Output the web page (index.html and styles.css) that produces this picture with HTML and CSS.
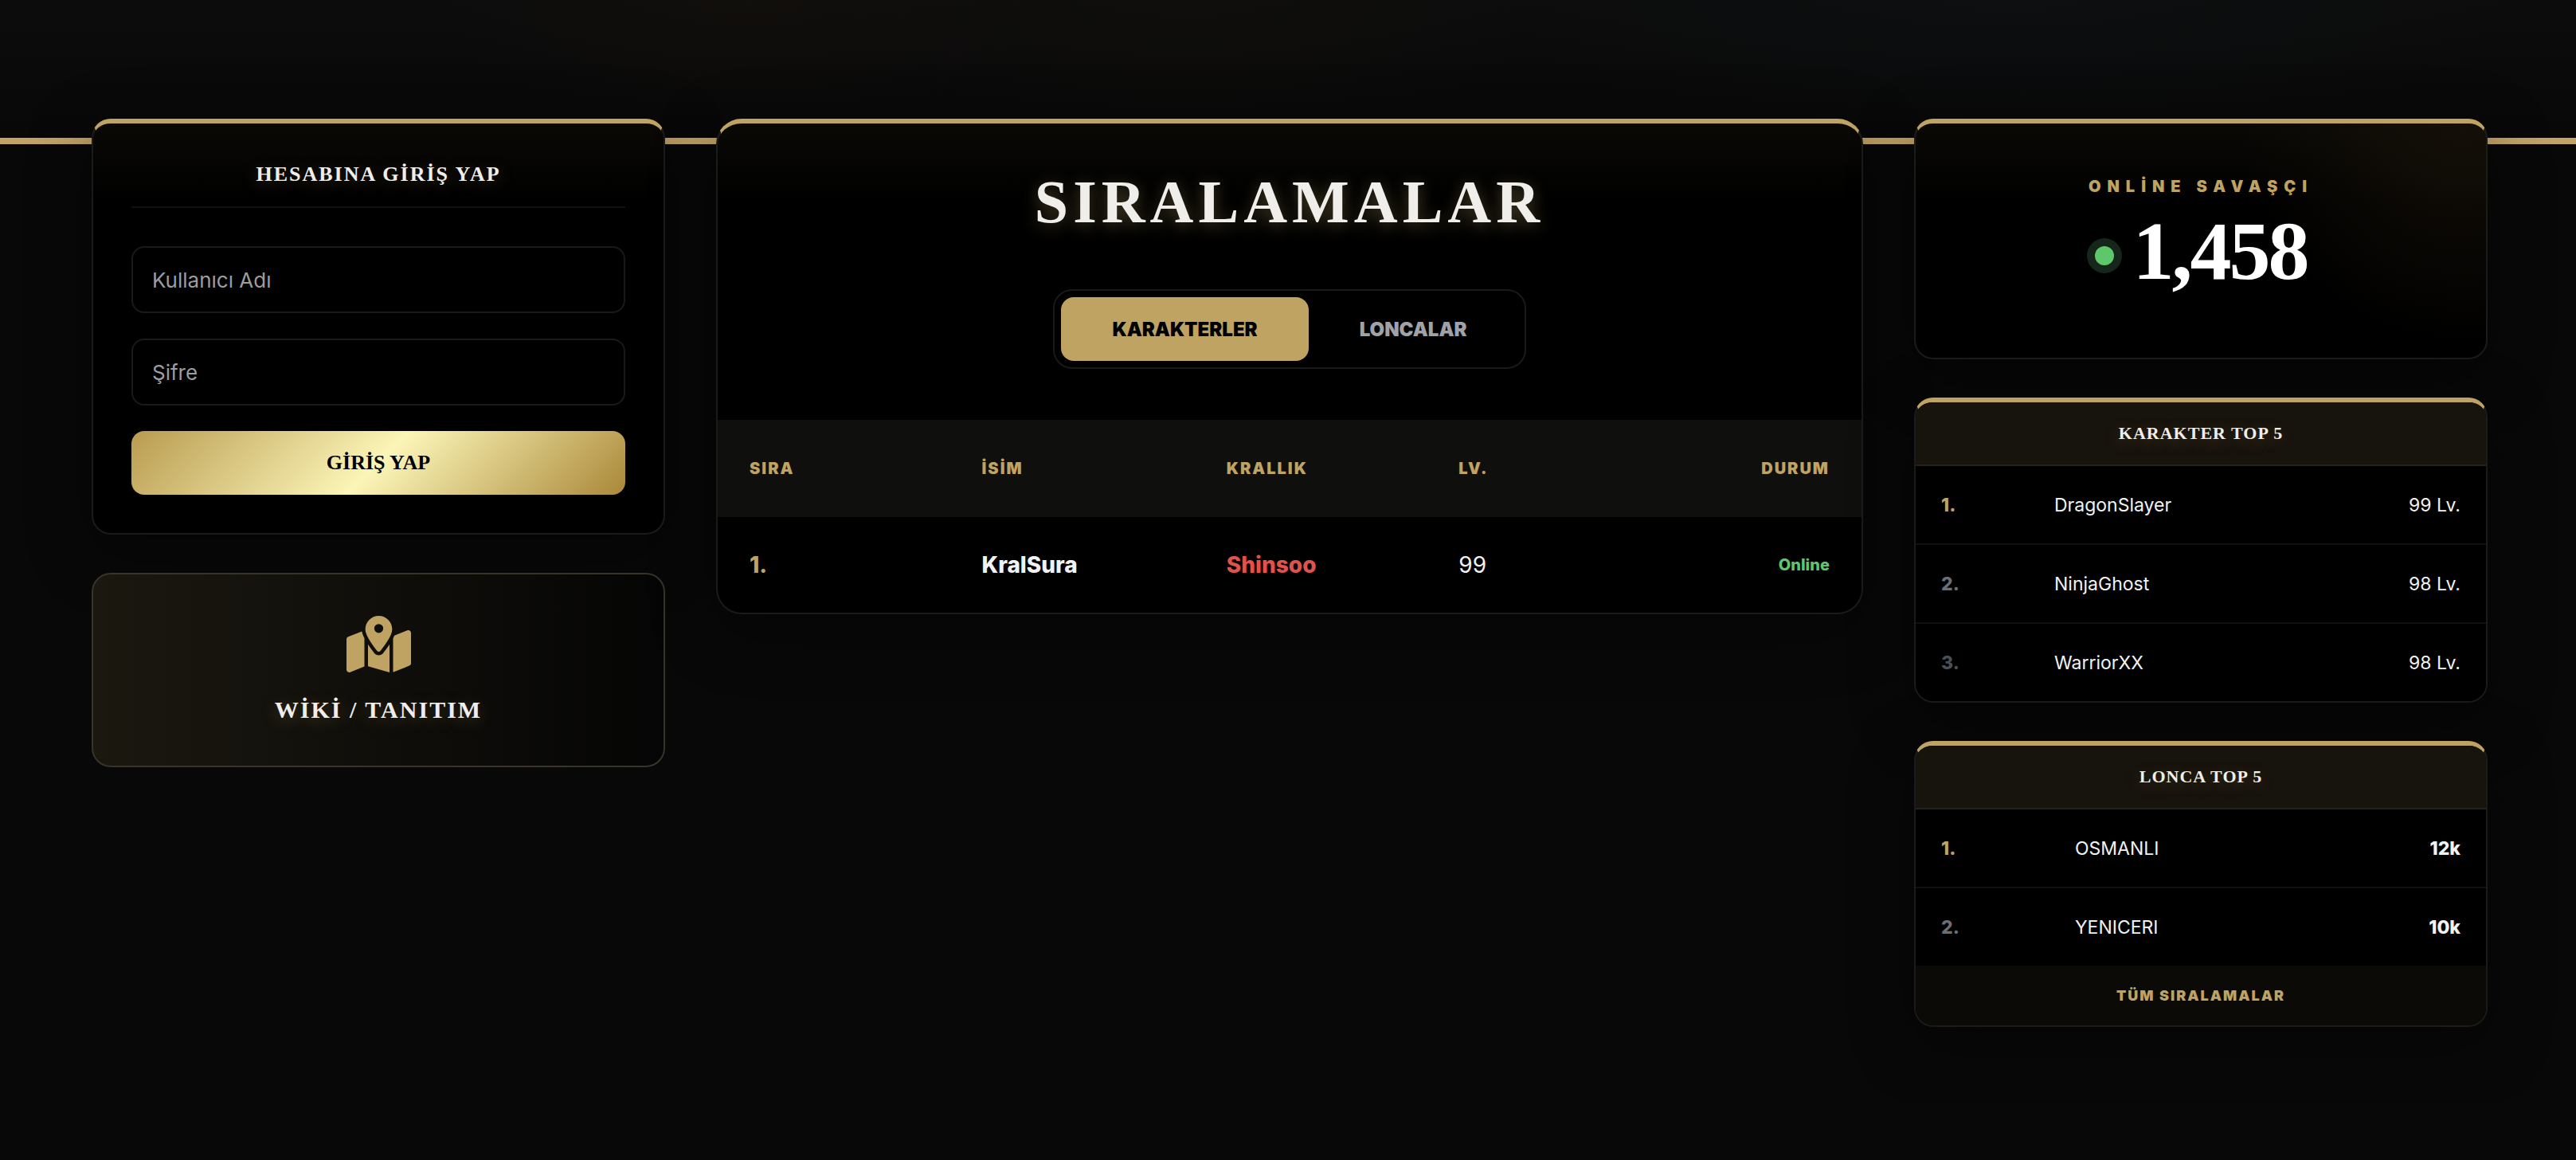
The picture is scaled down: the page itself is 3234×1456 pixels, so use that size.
FILE: index.html
```
<!DOCTYPE html>
<html lang="tr">
<head>
    <meta charset="UTF-8">
    <meta name="viewport" content="width=device-width, initial-scale=1.0">
    <title>Sıralamalar</title>
    <link rel="stylesheet" href="styles.css">
</head>
<body>
<header class="hero"></header>

<main class="layout">
    <aside class="column">
        <section class="card login">
            <h2 class="login-title">HESABINA GİRİŞ YAP</h2>
            <form class="login-form">
                <input type="text" name="username" placeholder="Kullanıcı Adı" aria-label="Kullanıcı Adı">
                <input type="password" name="password" placeholder="Şifre" aria-label="Şifre">
                <button type="submit" class="btn-gold">GİRİŞ YAP</button>
            </form>
        </section>

        <a href="#wiki" class="wiki">
            <span class="wiki-icon">
                <svg viewBox="0 0 576 512" aria-hidden="true">
                    <path d="M408 120c0 54.6-73.1 151.9-105.2 192c-7.7 9.6-22 9.6-29.6 0C241.1 271.9 168 174.6 168 120C168 53.7 221.7 0 288 0s120 53.7 120 120zm8 80.4c3.5-6.9 6.7-13.8 9.6-20.6c.5-1.2 1-2.5 1.5-3.7l116-46.4C558.9 123.4 576 135 576 152V422.8c0 9.8-6 18.6-15.1 22.3L416 503V200.4zM137.6 138.3c2.4 14.1 7.2 28.3 12.8 41.5c2.9 6.8 6.1 13.7 9.6 20.6V451.8L32.9 502.7C17.1 509 0 497.4 0 480.4V209.6c0-9.8 6-18.6 15.1-22.3l122.6-49zM327.8 332c13.9-17.4 35.7-45.7 56.2-77V504.3L192 449.4V255c20.5 31.3 42.3 59.6 56.2 77c20.5 25.6 59.1 25.6 79.6 0zM288 152a40 40 0 1 0 0-80 40 40 0 1 0 0 80z"/>
                </svg>
            </span>
            <span class="wiki-title">WİKİ / TANITIM</span>
        </a>
    </aside>

    <section class="card ranking">
        <div class="ranking-head">
            <h1>SIRALAMALAR</h1>
            <div class="tabs">
                <button type="button" class="tab active">KARAKTERLER</button>
                <button type="button" class="tab">LONCALAR</button>
            </div>
        </div>
        <table class="ranking-table">
            <thead>
                <tr>
                    <th class="col-rank">SIRA</th>
                    <th class="col-name">İSİM</th>
                    <th class="col-empire">KRALLIK</th>
                    <th>LV.</th>
                    <th class="col-status">DURUM</th>
                </tr>
            </thead>
            <tbody>
                <tr>
                    <td class="rank">1.</td>
                    <td class="name">KralSura</td>
                    <td class="shinsoo">Shinsoo</td>
                    <td>99</td>
                    <td class="col-status online">Online</td>
                </tr>
            </tbody>
        </table>
    </section>

    <aside class="column">
        <section class="card counter">
            <div class="counter-label">ONLİNE SAVAŞÇI</div>
            <div class="counter-value">
                <span class="pulse"></span>
                <span class="counter-number">1,458</span>
            </div>
        </section>

        <section class="card top">
            <h3>KARAKTER TOP 5</h3>
            <table class="top-table characters">
                <tr>
                    <td class="pos first">1.</td>
                    <td>DragonSlayer</td>
                    <td class="score">99 Lv.</td>
                </tr>
                <tr>
                    <td class="pos second">2.</td>
                    <td>NinjaGhost</td>
                    <td class="score">98 Lv.</td>
                </tr>
                <tr>
                    <td class="pos third">3.</td>
                    <td>WarriorXX</td>
                    <td class="score">98 Lv.</td>
                </tr>
            </table>
        </section>

        <section class="card top">
            <h3>LONCA TOP 5</h3>
            <table class="top-table guilds">
                <tr>
                    <td class="pos first">1.</td>
                    <td>OSMANLI</td>
                    <td class="score bold">12k</td>
                </tr>
                <tr>
                    <td class="pos second">2.</td>
                    <td>YENICERI</td>
                    <td class="score bold">10k</td>
                </tr>
            </table>
            <a href="#siralamalar" class="top-more">TÜM SIRALAMALAR</a>
        </section>
    </aside>
</main>
</body>
</html>
```
FILE: styles.css
```
:root {
    --gold: #bfa362;
    --border: #1b1b1a;
    --line: #101010;
    --title: #f0eeea;
    --serif: "Liberation Serif", serif;
    --sans: Inter, sans-serif;
}

* {
    box-sizing: border-box;
}

body {
    margin: 0;
    background-color: #080808;
    color: #f2f2f2;
    font-family: var(--sans);
}

h1, h2, h3 {
    margin: 0;
    color: var(--title);
    font-family: var(--serif);
    font-weight: bold;
    text-align: center;
}

.hero {
    height: 181px;
    border-bottom: 8px solid #c2a265;
    background:
        radial-gradient(ellipse 12% 90% at 29% 0, rgba(60, 38, 15, 0.12), transparent),
        radial-gradient(ellipse 14% 100% at 46% 0, rgba(50, 38, 22, 0.1), transparent),
        radial-gradient(ellipse 20% 100% at 78% 0, rgba(20, 38, 50, 0.12), transparent),
        linear-gradient(#0c0c0c, #080808);
}

.layout {
    display: grid;
    grid-template-columns: minmax(0, 1fr) minmax(0, 2fr) minmax(0, 1fr);
    gap: 64px;
    align-items: start;
    margin-top: -32px;
    padding: 0 111px 96px 115px;
}

.column {
    display: flex;
    flex-direction: column;
    gap: 48px;
}

.card {
    border: 2px solid var(--border);
    border-top: 6px solid var(--gold);
    border-radius: 24px;
    background: linear-gradient(#0a0906, #000 100px);
    box-shadow: 0 20px 80px rgba(0, 0, 0, 0.4);
    overflow: hidden;
}

/* Login */

.login {
    padding: 48px;
}

.login-title {
    padding-bottom: 24px;
    margin-bottom: 48px;
    border-bottom: 2px solid var(--line);
    font-size: 26px;
    line-height: 32px;
    letter-spacing: 2px;
    text-shadow: 0 4px 20px rgba(191, 163, 98, 0.3);
}

.login-form {
    display: flex;
    flex-direction: column;
    gap: 32px;
}

.login-form input {
    width: 100%;
    height: 84px;
    padding: 24px;
    border: 2px solid #1a1a1a;
    border-radius: 16px;
    background-color: #000;
    color: #f2f2f2;
    font-family: var(--sans);
    font-size: 26px;
    line-height: 32px;
}

.login-form input::placeholder {
    color: #9b9da1;
    opacity: 1;
}

.btn-gold {
    height: 80px;
    border: none;
    border-radius: 16px;
    background: linear-gradient(135deg, #b99b50, #fbf5b7 50%, #aa8839);
    color: #000;
    font-family: var(--serif);
    font-size: 26px;
    font-weight: bold;
    cursor: pointer;
}

.wiki {
    display: flex;
    flex-direction: column;
    align-items: center;
    gap: 20px;
    padding: 48px;
    border: 2px solid #38342a;
    border-radius: 24px;
    background: linear-gradient(90deg, #1b1810, #050505);
    text-decoration: none;
}

.wiki-icon {
    display: flex;
    align-items: center;
    height: 80px;
}

.wiki-icon svg {
    height: 72px;
    fill: var(--gold);
}

.wiki-title {
    color: var(--title);
    font-family: var(--serif);
    font-size: 30px;
    font-weight: bold;
    line-height: 44px;
    letter-spacing: 2px;
    text-shadow: 0 4px 20px rgba(191, 163, 98, 0.3);
}

/* Ranking */

.ranking {
    border-radius: 32px;
}

.ranking-head {
    display: flex;
    flex-direction: column;
    align-items: center;
    gap: 60px;
    padding: 48px 48px 64px;
}

.ranking-head h1 {
    font-size: 76px;
    line-height: 100px;
    letter-spacing: 6px;
    text-shadow: 0 4px 20px rgba(191, 163, 98, 0.4);
}

.tabs {
    display: flex;
    padding: 8px;
    border: 2px solid #191919;
    border-radius: 24px;
    background-color: #000;
}

.tab {
    height: 80px;
    padding: 0 64px;
    border: none;
    border-radius: 16px;
    background: none;
    color: #a0a2a8;
    font-family: var(--sans);
    font-size: 24px;
    font-weight: 900;
    cursor: pointer;
}

.tab.active {
    background-color: var(--gold);
    color: #000;
}

.ranking-table {
    width: 100%;
    border-collapse: collapse;
    table-layout: fixed;
}

.ranking-table th {
    height: 122px;
    padding: 0 40px;
    background-color: #0f0f0e;
    color: var(--gold);
    font-size: 20px;
    font-weight: 900;
    letter-spacing: 2px;
    text-align: left;
}

.ranking-table td {
    height: 120px;
    padding: 0 40px;
    font-size: 28px;
}

.col-rank {
    width: 20.3%;
}

.col-name {
    width: 21.4%;
}

.col-empire {
    width: 20.3%;
}

.ranking-table .col-status {
    text-align: right;
}

.ranking-table .rank {
    color: var(--gold);
    font-weight: 800;
}

.ranking-table .name {
    font-weight: 800;
}

.ranking-table .shinsoo {
    color: #e2524c;
    font-weight: 800;
}

.ranking-table .online {
    color: #60c56d;
    font-size: 20px;
    font-weight: 800;
}

/* Online counter */

.counter {
    padding: 64px 32px 74px;
    background:
        radial-gradient(circle 280px at 96% 0, #140f08, transparent),
        linear-gradient(#0a0906, #000 100px);
    text-align: center;
}

.counter-label {
    margin-bottom: 18px;
    color: var(--gold);
    font-size: 20px;
    font-weight: 900;
    line-height: 30px;
    letter-spacing: 8px;
}

.counter-value {
    display: flex;
    align-items: center;
    justify-content: center;
    gap: 24px;
}

.pulse {
    width: 24px;
    height: 24px;
    border-radius: 50%;
    background-color: #5fc76b;
    box-shadow: 0 0 0 10px #16261a;
}

.counter-number {
    padding-bottom: 12px;
    color: #fff;
    font-family: var(--serif);
    font-size: 104px;
    font-weight: bold;
    line-height: 96px;
    letter-spacing: -3px;
}

/* Top lists */

.top h3 {
    padding: 24px;
    border-bottom: 2px solid #25221b;
    background-color: #17130d;
    font-size: 22px;
    line-height: 30px;
    letter-spacing: 1px;
    text-shadow: 0 4px 20px rgba(191, 163, 98, 0.3);
}

.top-table {
    width: 100%;
    border-collapse: separate;
    border-spacing: 0;
    table-layout: fixed;
    background-color: #000;
}

.top-table td {
    height: 99px;
    padding: 0;
    border-bottom: 2px solid var(--line);
    font-size: 23px;
}

.top-table tr:last-child td {
    height: 97px;
    border-bottom: none;
}

.top-table .pos {
    padding-left: 32px;
    font-weight: 800;
}

.characters .pos {
    width: 174px;
}

.guilds .pos {
    width: 200px;
}

.first {
    color: var(--gold);
}

.second {
    color: #6b6e76;
}

.third {
    color: #4b4e55;
}

.top-table .score {
    padding-right: 32px;
    text-align: right;
}

.top-table .bold {
    font-weight: 800;
}

.top-more {
    display: block;
    padding: 24px;
    background-color: #0c0a06;
    color: var(--gold);
    font-size: 18px;
    font-weight: 900;
    line-height: 27px;
    letter-spacing: 2px;
    text-align: center;
    text-decoration: none;
}
```
